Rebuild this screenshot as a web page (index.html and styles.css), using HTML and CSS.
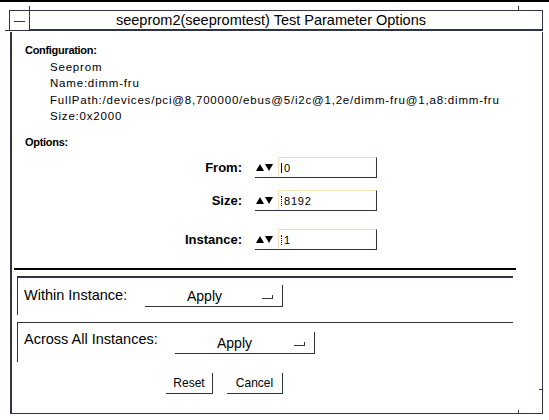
FILE: index.html
```html
<!DOCTYPE html>
<html>
<head>
<meta charset="utf-8">
<title>seeprom2(seepromtest) Test Parameter Options</title>
<link rel="stylesheet" href="styles.css">
</head>
<body>
<div class="screen">
  <div class="topline"></div>
  <div class="titlebar">
    <div class="menubtn"><span class="dash"></span></div>
    <div class="title">seeprom2(seepromtest) Test Parameter Options</div>
  </div>
  <div class="window">
    <div class="config">
      <div class="heading">Configuration:</div>
      <div class="values">
        <div class="val">Seeprom</div>
        <div class="val">Name:dimm-fru</div>
        <div class="val">FullPath:/devices/pci@8,700000/ebus@5/i2c@1,2e/dimm-fru@1,a8:dimm-fru</div>
        <div class="val">Size:0x2000</div>
      </div>
      <div class="heading heading-options">Options:</div>
    </div>
    <div class="opts">
      <div class="opt-row row-from">
        <div class="opt-label">From:</div>
        <div class="spin">
          <svg class="arrows" width="18" height="7" viewBox="0 0 18 7"><polygon points="0,7 4,0 8,7" fill="#000"/><polygon points="9,0 17,0 13,7" fill="#000"/></svg>
          <div class="field"><span class="caret caret-solid"></span>0</div>
        </div>
      </div>
      <div class="opt-row row-size">
        <div class="opt-label">Size:</div>
        <div class="spin">
          <svg class="arrows" width="18" height="7" viewBox="0 0 18 7"><polygon points="0,7 4,0 8,7" fill="#000"/><polygon points="9,0 17,0 13,7" fill="#000"/></svg>
          <div class="field"><span class="caret"></span>8192</div>
        </div>
      </div>
      <div class="opt-row row-instance">
        <div class="opt-label">Instance:</div>
        <div class="spin">
          <svg class="arrows" width="18" height="7" viewBox="0 0 18 7"><polygon points="0,7 4,0 8,7" fill="#000"/><polygon points="9,0 17,0 13,7" fill="#000"/></svg>
          <div class="field"><span class="caret"></span>1</div>
        </div>
      </div>
    </div>
    <div class="sep"></div>
    <div class="frame frame-within">
      <div class="frame-label">Within Instance:</div>
      <div class="optmenu"><span class="om-text">Apply</span><span class="om-ind"></span></div>
    </div>
    <div class="frame frame-across">
      <div class="frame-label">Across All Instances:</div>
      <div class="optmenu"><span class="om-text">Apply</span><span class="om-ind"></span></div>
    </div>
    <div class="buttons">
      <div class="btn btn-reset">Reset</div>
      <div class="btn btn-cancel">Cancel</div>
    </div>
  </div>
</div>
</body>
</html>
```

FILE: styles.css
```css
html, body {
  margin: 0;
  padding: 0;
  background: #ffffff;
}

.screen {
  width: 549px;
  height: 420px;
  background: #ffffff;
  overflow: hidden;
  font-family: "Liberation Sans", Arial, sans-serif;
  color: #000;
}

.topline {
  height: 2px;
  background: #000;
}

/* title bar */
.titlebar {
  display: flex;
  margin: 8px 0 0 9px;
  width: 534px;
  height: 21px;
  position: relative;
}

/* resize-handle ticks of the window frame */
.titlebar::before,
.titlebar::after {
  content: "";
  position: absolute;
  top: -4px;
  width: 1px;
  height: 4px;
  background: #2f3442;
}

.titlebar::before { left: 20px; }
.titlebar::after { left: 509px; }

.menubtn {
  width: 21px;
  box-sizing: border-box;
  border: 1px solid #2f3442;
  display: flex;
  align-items: center;
  justify-content: center;
  position: relative;
}

.menubtn::before {
  content: "";
  position: absolute;
  left: -5px;
  bottom: -1px;
  width: 5px;
  height: 1px;
  background: #2f3442;
}

.dash {
  display: block;
  width: 11px;
  height: 1px;
  background: #2f3442;
  margin-top: 1px;
}

.title {
  flex: 1;
  box-sizing: border-box;
  border-top: 1px solid #2f3442;
  border-bottom: 2px solid #2f3442;
  border-right: 1px solid #2f3442;
  font-size: 14.5px;
  line-height: 18px;
  text-align: center;
  padding-right: 30px;
  white-space: nowrap;
}

/* window body */
.window {
  margin: 1px 0 0 10px;
  width: 533px;
  box-sizing: border-box;
  border-left: 2px solid #2f3442;
  border-right: 1px solid #2f3442;
  border-bottom: 1px solid #2f3442;
  padding-bottom: 19px;
  position: relative;
}

.window::after {
  content: "";
  position: absolute;
  left: 506px;
  bottom: -1px;
  width: 1px;
  height: 4px;
  background: #2f3442;
}

.window::before {
  content: "";
  position: absolute;
  right: -1px;
  bottom: 23px;
  width: 4px;
  height: 1px;
  background: #2f3442;
}

.config {
  padding: 11px 0 0 13px;
}

.heading {
  font-size: 11px;
  font-weight: bold;
  letter-spacing: -0.3px;
  line-height: 14px;
}

.values {
  margin: 2px 0 0 25px;
}

.val {
  font-size: 11.5px;
  letter-spacing: 0.8px;
  line-height: 16.3px;
  white-space: nowrap;
}

.heading-options {
  margin-top: 11px;
}

/* options rows */
.opt-row {
  display: flex;
  align-items: center;
}

.row-from { margin-top: 8px; }
.row-size { margin-top: 12px; }
.row-instance { margin-top: 18px; }

.opt-label {
  width: 230px;
  text-align: right;
  font-size: 13px;
  font-weight: bold;
}

.spin {
  margin-left: 13px;
  display: flex;
  align-items: center;
  border-bottom: 1px solid #2f3442;
  height: 21px;
  box-sizing: border-box;
}

.arrows {
  margin: 0 4px 0 1px;
}

.field {
  width: 99px;
  height: 20px;
  box-sizing: border-box;
  border-top: 1px solid #f5dfb6;
  border-left: 1px solid #f5dfb6;
  border-right: 1px solid #2f3442;
  font-size: 11px;
  letter-spacing: 0.8px;
  display: flex;
  align-items: center;
  padding-left: 2px;
}

.caret {
  display: inline-block;
  width: 0;
  height: 10px;
  border-left: 1px dotted #000;
  margin-right: 2px;
}

.caret-solid {
  border-left-style: solid;
}

/* separator */
.sep {
  margin: 18px 0 0 2px;
  width: 502px;
  height: 2px;
  background: #000;
}

/* frames */
.frame {
  margin-left: 5px;
  width: 496px;
  box-sizing: border-box;
  border-left: 1px solid #2f3442;
  display: flex;
  align-items: flex-start;
  padding-left: 6px;
}

.frame-within {
  margin-top: 6px;
  height: 39px;
  border-top: 2px solid #2f3442;
}

.frame-across {
  margin-top: 7px;
  height: 40px;
  border-top: 1px solid #2f3442;
}

.frame-label {
  font-size: 14.5px;
  line-height: 16px;
  margin-top: 9px;
  white-space: nowrap;
}

.frame-within .frame-label { width: 121px; }
.frame-across .frame-label { width: 151px; margin-top: 8px; }

.optmenu {
  width: 138px;
  height: 22px;
  box-sizing: border-box;
  border-right: 1px solid #2f3442;
  border-bottom: 1px solid #2f3442;
  display: flex;
  align-items: center;
  margin-top: 7px;
}

.frame-across .optmenu {
  width: 140px;
  margin-top: 9px;
}

.om-text {
  font-size: 14px;
  padding-left: 42px;
}

.om-ind {
  margin-left: auto;
  margin-right: 9px;
  width: 10px;
  height: 3px;
  border-bottom: 1px solid #2f3442;
  border-right: 1px solid #2f3442;
  margin-top: 2px;
}

/* buttons */
.buttons {
  display: flex;
  margin: 11px 0 0 154px;
  gap: 14px;
}

.btn {
  height: 21px;
  box-sizing: border-box;
  border-right: 1px solid #2f3442;
  border-bottom: 1px solid #2f3442;
  font-size: 12px;
  line-height: 20px;
  text-align: center;
}

.btn-reset { width: 47px; }
.btn-cancel { width: 56px; }
```
